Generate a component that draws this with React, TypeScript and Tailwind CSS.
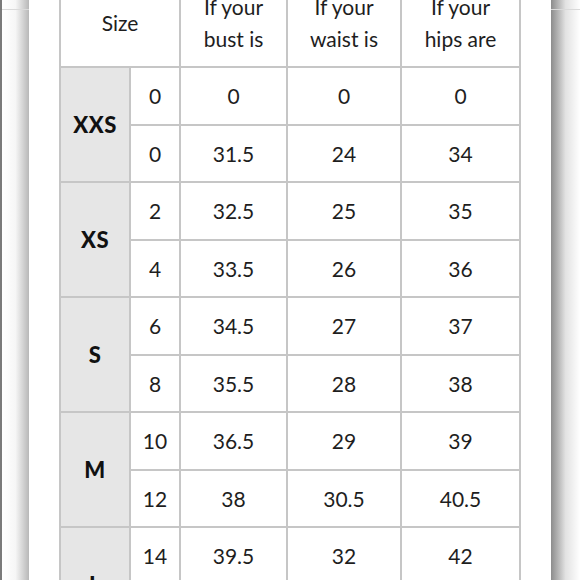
export default function App() {
  const groups = [
    { label: "XXS", rows: [["0", "0", "0", "0"], ["0", "31.5", "24", "34"]] },
    { label: "XS", rows: [["2", "32.5", "25", "35"], ["4", "33.5", "26", "36"]] },
    { label: "S", rows: [["6", "34.5", "27", "37"], ["8", "35.5", "28", "38"]] },
    { label: "M", rows: [["10", "36.5", "29", "39"], ["12", "38", "30.5", "40.5"]] },
    { label: "L", rows: [["14", "39.5", "32", "42"], ["16", "41", "33.5", "43.5"]] },
  ];

  const cell = "bg-white flex items-center justify-center text-[21px] text-[#1e1e1e]";

  return (
    <div
      className="h-screen w-full flex overflow-hidden bg-white"
      style={{ fontFamily: "Lato, 'Noto Sans', sans-serif" }}
    >
      {/* left edge */}
      <div className="w-[29px] shrink-0 border-l-2 border-[#7a7a7a] bg-gradient-to-r from-white via-[#f6f6f6] to-[#b8b8b8]">
        <div className="h-[9px]" />
        <div className="border-t border-[#dadada]" />
      </div>

      {/* paper */}
      <div className="flex-1 bg-white">
        <div className="ml-[30px] mt-[-23px] w-max grid grid-cols-[68px_48px_105px_112px_117px] grid-rows-[87px_repeat(10,55.5px)] gap-[2px] bg-[#c6c6c6] p-[2px]">
          <div className={`${cell} col-span-2`}>Size</div>
          <div className={`${cell} text-center leading-[32px]`}>
            If your
            <br />
            bust is
          </div>
          <div className={`${cell} text-center leading-[32px]`}>
            If your
            <br />
            waist is
          </div>
          <div className={`${cell} text-center leading-[32px]`}>
            If your
            <br />
            hips are
          </div>

          {groups.map((g) => (
            <>
              <div
                key={g.label}
                className="row-span-2 bg-[#e6e6e6] flex items-center justify-center text-[22px] font-black tracking-[0.5px] text-[#111]"
              >
                {g.label}
              </div>
              {g.rows[0].map((v, i) => (
                <div key={`${g.label}a${i}`} className={cell}>
                  {v}
                </div>
              ))}
              {g.rows[1].map((v, i) => (
                <div key={`${g.label}b${i}`} className={cell}>
                  {v}
                </div>
              ))}
            </>
          ))}
        </div>
      </div>

      {/* right edge */}
      <div className="w-[29px] shrink-0 bg-gradient-to-r from-[#8c8c8c] via-[#e2e2e2] to-white">
        <div className="h-[9px]" />
        <div className="border-t border-[#dadada]" />
      </div>
    </div>
  );
}
